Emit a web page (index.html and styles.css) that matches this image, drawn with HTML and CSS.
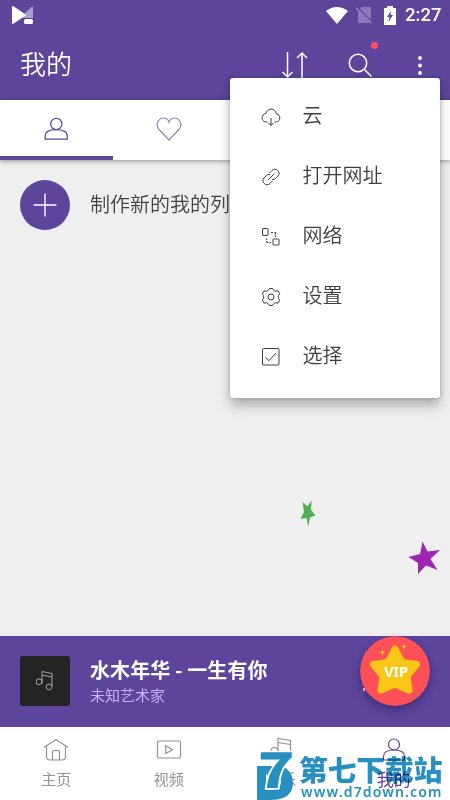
FILE: index.html
```html
<!DOCTYPE html>
<html lang="zh-CN">
<head>
<meta charset="utf-8">
<title>我的</title>
<link rel="stylesheet" href="styles.css">
</head>
<body>
<div class="app">
  <header class="header">
    <div class="status">
      <svg class="brand" width="24" height="20" viewBox="0 0 24 20"><path d="M12 10 21 1.500Q22 1 22 3V13H12Z" fill="#a99bd3"/><path d="M2 1 15.500 10 2 19Q1 19 1 18V2Q1 1 2 1Z" fill="#fff"/><rect x="13" y="14" width="9" height="5" rx="1.500" fill="#fff"/></svg>
      <svg class="wifi" width="22" height="17" viewBox="0 0 22 17"><path d="M0 4Q11-4 22 4L11 17Z" fill="#fff"/></svg>
      <svg class="sim" width="18" height="18" viewBox="0 0 18 18"><path d="M5.500 1H15V17H2V5Z" fill="#8b79bb"/><path d="M0 1 16 17" stroke="#5c459b" stroke-width="3"/><path d="M0 2 15.500 17" stroke="#9c8bc9" stroke-width="1.300"/></svg>
      <svg class="battery" width="12" height="19" viewBox="0 0 12 19"><path d="M0 2H3V0H9V2H12V19H0Z" fill="#fff"/><path d="M7 5 3 11H5.500L4.500 16 9 9H6.500Z" fill="#5c459b"/></svg>
      <span class="time">2:27</span>
    </div>
    <div class="bar">
      <h1 class="title">我的</h1>
      <svg class="sort" width="28" height="28" viewBox="0 0 28 28"><path d="M7.500 1V26M2.500 21 7.500 26 12.500 21M22 27V2M17 7 22 2 27 7"/></svg>
      <svg class="search" width="26" height="26" viewBox="0 0 26 26"><circle cx="10" cy="10" r="8.700"/><path d="M16.500 16.500 23.500 23.500"/></svg>
      <svg class="more" width="4" height="20" viewBox="0 0 4 20"><circle cx="2" cy="2" r="1.900"/><circle cx="2" cy="9.500" r="1.900"/><circle cx="2" cy="17" r="1.900"/></svg>
      <i class="dot"></i>
    </div>
  </header>
  <nav class="tabs">
    <div class="tab tab-on"><svg width="26" height="26" viewBox="0 0 26 26"><circle cx="13.300" cy="8" r="5.600"/><path d="M2.200 23.200V20C2.200 15.500 7 13.600 13.200 13.600S24.200 15.500 24.200 20V23.200Z"/></svg></div>
    <div class="tab"><svg width="26" height="26" viewBox="0 0 26 26"><path d="M13 24 3 13.500C-1.500 8 3 2 7.500 2 10.500 2 12.200 3.800 13 6 13.800 3.800 15.500 2 18.500 2 23 2 27.500 8 23 13.500Z"/></svg></div>
    <div class="tab"></div>
    <div class="tab"></div>
  </nav>
  <main class="content">
    <div class="new-row">
      <span class="add"><svg width="24" height="24" viewBox="0 0 24 24"><path d="M12 .5V23.500M.5 12H23.500"/></svg></span>
      <span class="new-label">制作新的我的列表</span>
    </div>
  </main>
  <section class="player">
    <div class="cover"><svg width="20" height="22" viewBox="0 0 20 22"><path d="M7 14V1.500L17 3.500V16M7 5 17 7"/><circle cx="4" cy="11.800" r="2.900"/><circle cx="14" cy="17" r="2.900"/></svg></div>
    <div class="song"><div class="song-title">水木年华 - 一生有你</div><div class="artist">未知艺术家</div></div>
    <i class="spark"></i>
    <svg class="vip" width="70" height="70" viewBox="0 0 70 70"><circle cx="35" cy="35" r="35" fill="#fe5056"/><path d="M35 13 42 26.500 56.500 28.500 47 40 49 54 35 48 21 54 23 40 13.500 28.500 28 26.500Z" fill="#f8c715" stroke="#f8c715" stroke-width="7" stroke-linejoin="round"/><path d="M22.500 13 23.300 15.500 25.500 16.500 23.300 17.400 22.500 20 21.700 17.400 19.500 16.500 21.700 15.500ZM44 7.500 44.800 9.700 47 10.500 44.800 11.300 44 13.500 43.200 11.300 41 10.500 43.200 9.700Z" fill="#f8c715"/><text x="36" y="41" text-anchor="middle" textLength="24">VIP</text></svg>
  </section>
  <nav class="bottom">
    <div class="item"><svg width="28" height="28" viewBox="0 0 28 28"><path d="M2 11.500 14 3.500 26 11.500M4.500 10V20.500Q4.500 24 8 24H20Q23.500 24 23.500 20.500V10M10.500 24V16Q10.500 14.500 12 14.500H16Q17.500 14.500 17.500 16V24"/></svg><span>主页</span></div>
    <div class="item"><svg width="28" height="28" viewBox="0 0 28 28"><rect x="2.500" y="5" width="23" height="17" rx="1.300"/><path d="M10.700 9.800V17.500L17.500 13.700Z"/></svg><span>视频</span></div>
    <div class="item"><svg width="28" height="28" viewBox="0 0 28 28"><path d="M11 18V2.500L23.500 4.500V20M11 6.500 23.500 8.500"/><circle cx="7.500" cy="15" r="3.500"/><circle cx="20" cy="20" r="3.500"/></svg><span>音乐</span></div>
    <div class="item item-on"><svg width="28" height="28" viewBox="0 0 28 28"><circle cx="14" cy="8.500" r="5.500"/><path d="M3.500 24V20.500C3.500 16 8 14 14 14S24.500 16 24.500 20.500V24Z"/></svg><span>我的</span></div>
  </nav>

  <div class="menu">
    <div class="menu-item"><svg width="20" height="20" viewBox="0 0 20 20"><path d="M6.500 15H5C-.5 14.500 0 7 5 6.500 6.500.5 14 .5 15.500 7 20 7.500 20 14.500 15 15H13.500M10 11V18.500M7.500 16 10 18.500 12.500 16"/></svg><span>云</span></div>
    <div class="menu-item"><svg width="20" height="20" viewBox="0 0 20 20"><path d="M6.800 13.200 13.200 6.800M8.500 6 11 3.500C14.500-.2 20.500 5 17 9L14.500 11.500Q13 13 10.800 12.500M11.500 14 9 16.500C5.500 20.200-.5 15 3 11L5.500 8.500Q7 7 9.200 7.500"/></svg><span>打开网址</span></div>
    <div class="menu-item"><svg width="20" height="20" viewBox="0 0 20 20"><rect x="1.500" y="1.500" width="5.500" height="7" rx=".5"/><rect x="12" y="12" width="6" height="6" rx=".5"/><path d="M10 5.500H12M13.500 5.500H15M14.500 6V7.500M14.500 8.500V10M5.500 11.500V13M5.500 14V15.500M6 15.500H7.500M8.500 15.500H10" stroke-width="1.200"/></svg><span>网络</span></div>
    <div class="menu-item"><svg width="20" height="20" viewBox="0 0 20 20"><path d="M8.500 1.500H11.500Q12.500 3.800 14.300 4.300L17 3.900 18.700 6.800Q17.200 8.500 17.200 10T18.700 13.200L17 16.100 14.300 15.700Q12.500 16.200 11.500 18.500H8.500Q7.500 16.200 5.700 15.700L3 16.100 1.300 13.200Q2.800 11.500 2.800 10T1.300 6.800L3 3.900 5.700 4.300Q7.500 3.800 8.500 1.500Z"/><circle cx="10" cy="10" r="3"/></svg><span>设置</span></div>
    <div class="menu-item"><svg width="20" height="20" viewBox="0 0 20 20"><rect x="1.500" y="1.500" width="16.500" height="16.500" rx="1"/><path d="M4.500 10.500 8 13.700 15 6"/></svg><span>选择</span></div>
  </div>

  <svg class="confetti-green" width="16" height="28" viewBox="0 0 16 28"><path d="M2.500 2 7.500 6.500 11.500.5 11 10 15.500 15.500 10 17.500 8.300 26.500 6.500 18 .5 19 4 12Z" fill="#4caf50"/></svg>
  <svg class="confetti-purple" width="34" height="34" viewBox="0 0 34 34"><path d="M14.500.5 19.500 10.500 32 9 22.500 18 29.500 29 18 24.500 10 33 10 22 .5 16 12 13Z" fill="#9c27b0"/></svg>

  <div class="stamp">
    <svg class="stamp-logo" width="40" height="48" viewBox="0 0 40 48"><path fill-rule="evenodd" d="M0 14H25Q36 19 36 31Q36 42 26 46Q21 48 14 48H0ZM9 22V38H15Q24 37 24 29Z"/><text transform="translate(-1 36) skewX(-3)" textLength="37" lengthAdjust="spacingAndGlyphs">7</text></svg>
    <div class="stamp-words"><div class="stamp-name">第七下载站</div><div class="stamp-url">www.d7down.com</div></div>
  </div>
</div>
</body>
</html>
```
FILE: styles.css
```css
* { box-sizing: border-box; }
body { margin: 0; font-family: "Noto Sans CJK SC", sans-serif; }
svg { display: block; flex: none; fill: none; }
.app { position: relative; width: 450px; height: 800px; overflow: hidden; display: flex; flex-direction: column; background: #efefef; }
.header { height: 100px; background: #5c459b; color: #fff; flex: none; }
.status { height: 30px; display: flex; align-items: center; padding: 0 10px 0 11px; }
.brand { margin-right: auto; }
.wifi { margin-right: 8px; }
.sim { margin-right: 10px; }
.battery { margin-right: 9px; }
.time { font: 500 18.500px/30px Roboto, sans-serif; width: 35px; white-space: nowrap; }
.bar { position: relative; height: 70px; display: flex; align-items: center; padding: 0 28px 0 20px; }
.title { margin: 0 auto 4px 0; font-size: 26px; font-weight: 350; line-height: 40px; }
.sort, .search { stroke: #fff; stroke-width: 1.500; }
.sort { margin-right: 40px; }
.search { margin-right: 44px; margin-top: 1px; }
.more { fill: #fff; margin-top: 1px; }
.dot { position: absolute; left: 371px; top: 12px; width: 7px; height: 7px; border-radius: 50%; background: #fa5068; }
.tabs { height: 60px; display: grid; grid-template-columns: 112.500px 1fr 1fr 1fr; background: #fff; box-shadow: 0 1px 5px rgba(0,0,0,.4); flex: none; z-index: 1; }
.tab { display: flex; justify-content: center; align-items: center; border-bottom: 4px solid transparent; padding-top: 1px; stroke: #8f84b8; stroke-width: 1.200; }
.tab-on { border-color: #5c459b; stroke: #5c459b; }
.content { flex: 1; }
.new-row { display: flex; align-items: center; gap: 20px; padding: 20px 20px 0; }
.add { width: 50px; height: 50px; border-radius: 50%; background: #5c459b; display: flex; align-items: center; justify-content: center; stroke: #fff; stroke-width: 1.400; }
.new-label { margin-top: -2px; font-size: 20px; line-height: 30px; color: #424242; font-weight: 350; white-space: nowrap; }
.player { position: relative; height: 90.500px; background: #5c459b; display: flex; align-items: center; padding: 0 20px; gap: 20px; flex: none; }
.cover { width: 50px; height: 50px; border-radius: 3px; background: #242424; display: flex; align-items: center; justify-content: center; stroke: #a5a5a5; stroke-width: 1; }
.song { flex: 1; margin-top: -2px; }
.song-title { color: #fff; font-weight: 700; font-size: 20px; line-height: 29px; letter-spacing: .1px; }
.artist { color: #c5b2f4; font-size: 15px; line-height: 22px; }
.vip { position: absolute; left: 360px; top: 0; border-radius: 50%; box-shadow: 0 4px 8px rgba(30,10,70,.4); }
.vip text { font: 700 15px "Noto Sans", sans-serif; fill: #fff; }
.spark { position: absolute; left: 363px; top: 52px; width: 2px; height: 3px; background: #ddd6ef; }
.bottom { height: 73.500px; display: grid; grid-template-columns: repeat(4, 1fr); background: #fff; flex: none; }
.item { display: flex; flex-direction: column; align-items: center; padding-top: 9px; stroke: #929292; stroke-width: 1.200; color: #929292; font-size: 15px; line-height: 22px; }
.item span { margin-top: 4px; }
.item-on { stroke: #5c459b; color: #5c459b; }
.item-on span { font-size: 17px; }
.menu { position: absolute; z-index: 2; left: 230px; top: 78px; width: 210px; height: 320px; padding: 9px 0 11px; border-radius: 3px; background: #fff; box-shadow: 0 8px 12px rgba(0,0,0,.25), 0 0 4px rgba(0,0,0,.2); }
.menu-item { display: flex; align-items: center; gap: 21.500px; height: 60px; padding-left: 31px; color: #3e3e3e; font-size: 20px; line-height: 30px; font-weight: 350; stroke: #3e3e3e; stroke-width: 1; }
.menu-item span { margin-bottom: 5px; }
.confetti-green { position: absolute; left: 300px; top: 500px; }
.confetti-purple { position: absolute; left: 408px; top: 541px; }
.stamp { position: absolute; left: 257px; top: 752px; display: flex; gap: 2px; color: #2890c0; }
.stamp-logo { fill: #2890c0; overflow: visible; }
.stamp-logo text { font: 900 48px "Noto Sans CJK SC", sans-serif; stroke: #fff; stroke-width: 3; paint-order: stroke; }
.stamp-words { padding-top: 1px; mix-blend-mode: multiply; }
.stamp-name { font-size: 28.700px; line-height: 32px; font-weight: 900; white-space: nowrap; }
.stamp-url { padding-left: 2px; font: 600 14px/13px "Noto Sans", sans-serif; letter-spacing: 1.150px; white-space: nowrap; }
```
